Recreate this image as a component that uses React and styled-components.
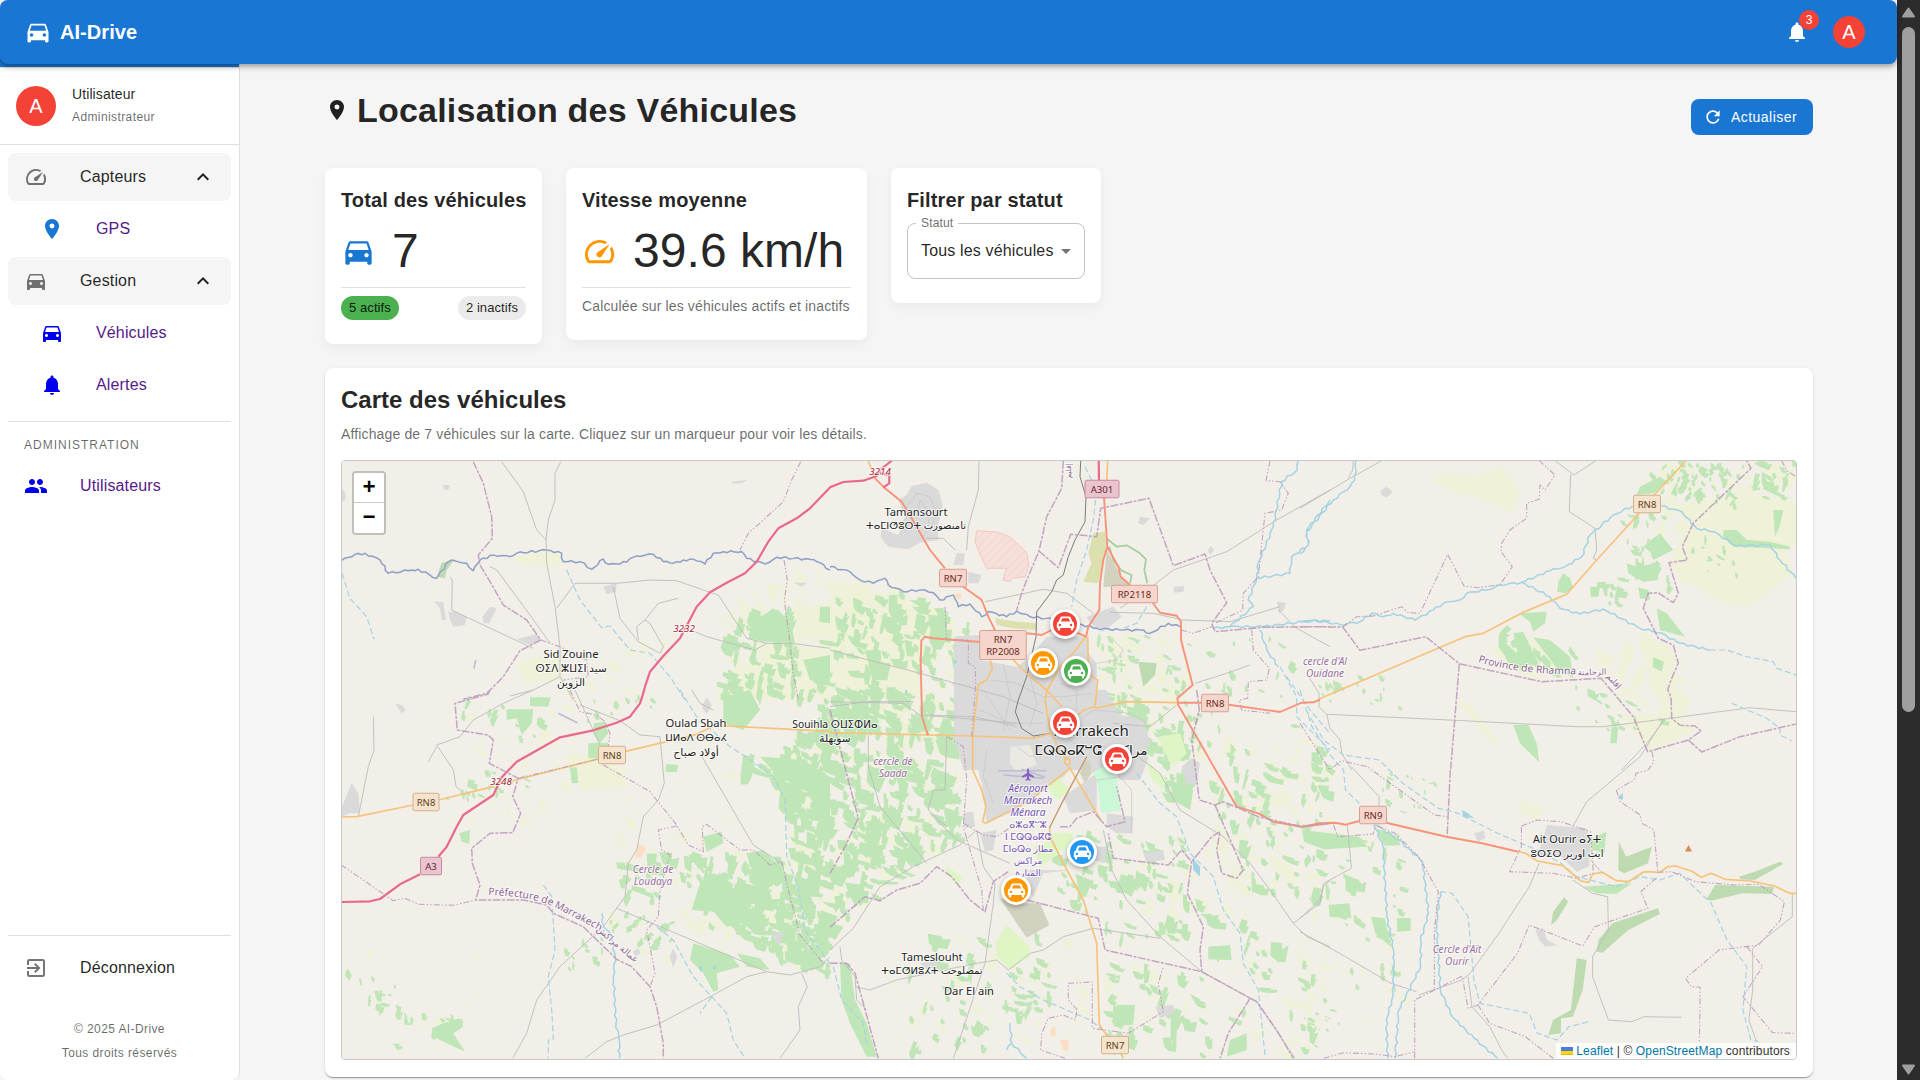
import React from "react";
import styled, { createGlobalStyle, css } from "styled-components";
import {
  MdDirectionsCar,
  MdSpeed,
  MdLocationOn,
  MdNotifications,
  MdPeople,
  MdExitToApp,
  MdRefresh,
  MdExpandLess,
  MdArrowDropDown,
} from "react-icons/md";

const GlobalStyle = createGlobalStyle`
  *, *::before, *::after { box-sizing: border-box; }
  html, body { margin: 0; padding: 0; height: 100%; overflow: hidden; }
  body {
    background: #f5f5f5;
    color: rgba(0, 0, 0, 0.87);
    font-family: "Liberation Sans", Arial, sans-serif;
    font-size: 16px;
    line-height: 1.5;
    letter-spacing: 0.00938em;
  }
  #root { height: 100%; }
  svg { display: block; flex: none; }
`;

/* ---------- shell ---------- */
const Frame = styled.div`
  display: flex;
  height: 1080px;
`;
const Page = styled.div`
  flex: 1;
  min-width: 0;
  display: flex;
  flex-direction: column;
`;
const Body = styled.div`
  flex: 1;
  min-height: 0;
  display: flex;
`;
const ScrollTrack = styled.div`
  width: 23px;
  background: #2c2c2c;
  display: flex;
  flex-direction: column;
  align-items: center;
  padding: 7px 0 5px;
`;
const ScrollThumb = styled.div`
  width: 13px;
  height: 685px;
  margin: 9px 0 auto;
  border-radius: 7px;
  background: #9f9f9f;
`;

/* ---------- header ---------- */
const Header = styled.header`
  position: relative;
  z-index: 2;
  height: 64px;
  flex: none;
  display: flex;
  align-items: center;
  padding: 0 32px 0 24px;
  border-radius: 8px;
  background: #1976d2;
  color: #fff;
  box-shadow: 0 2px 4px -1px rgba(0, 0, 0, 0.2), 0 4px 5px 0 rgba(0, 0, 0, 0.14),
    0 1px 10px 0 rgba(0, 0, 0, 0.12);
`;
const Brand = styled.div`
  flex: 1;
  display: flex;
  align-items: center;
  gap: 8px;
  font-size: 20px;
  font-weight: 700;
  letter-spacing: 0.003em;
`;
const BellButton = styled.div`
  position: relative;
  margin-right: 24px;
`;
const Badge = styled.span`
  position: absolute;
  top: -10px;
  right: -10px;
  width: 20px;
  height: 20px;
  border-radius: 50%;
  background: #f44336;
  font-size: 12px;
  line-height: 20px;
  text-align: center;
  letter-spacing: 0;
  font-weight: 500;
`;
const Avatar = styled.div`
  width: ${(p) => p.$size}px;
  height: ${(p) => p.$size}px;
  flex: none;
  border-radius: 50%;
  background: #f44336;
  color: #fff;
  display: flex;
  align-items: center;
  justify-content: center;
  font-size: 20px;
  line-height: 1;
  letter-spacing: 0;
`;

/* ---------- sidebar ---------- */
const Sidebar = styled.aside`
  width: 240px;
  margin-top: -8px;
  flex: none;
  display: flex;
  flex-direction: column;
  background: #fff;
  border-right: 1px solid #e0e0e0;
  border-radius: 0 0 8px 8px;
  overflow: hidden;
`;
const TopStrip = styled.div`
  height: 11px;
  flex: none;
  margin-right: -1px;
  background: #1976d2;
`;
const UserBlock = styled.div`
  height: 78px;
  flex: none;
  display: flex;
  align-items: center;
  gap: 16px;
  padding: 0 16px;
  border-top: 1px solid #e0e0e0;
  border-bottom: 1px solid #e0e0e0;
`;
const UserName = styled.div`
  font-size: 14px;
  line-height: 22px;
  letter-spacing: 0.1px;
`;
const UserRole = styled.div`
  font-size: 12px;
  line-height: 20px;
  margin: 2px 0 2px;
  letter-spacing: 0.4px;
  color: rgba(0, 0, 0, 0.6);
`;
const Nav = styled.nav`
  flex: 1;
  padding: 8px 8px 0;
`;
const NavItem = styled.div`
  height: 48px;
  margin-bottom: 4px;
  display: flex;
  align-items: center;
  padding: 0 16px 0 ${(p) => (p.$nested ? 32 : 16)}px;
  border-radius: 8px;
  background: ${(p) => (p.$group ? "#f5f5f5" : "transparent")};
  color: ${(p) => p.$icon || "rgba(0,0,0,.54)"};
`;
const NavLabel = styled.span`
  flex: 1;
  margin-left: 32px;
  color: ${(p) => (p.$link ? "#551a8b" : "rgba(0,0,0,.87)")};
`;
const Chevron = styled.span`
  color: rgba(0, 0, 0, 0.87);
`;
const Rule = styled.hr`
  height: 1px;
  border: 0;
  margin: ${(p) => p.$m || "0"};
  background: #e0e0e0;
`;
const Overline = styled.div`
  padding-left: 16px;
  height: 33px;
  line-height: 32px;
  font-size: 12px;
  letter-spacing: 1px;
  text-transform: uppercase;
  color: rgba(0, 0, 0, 0.6);
`;
const SideFooter = styled.div`
  padding: 0 8px 15px;
`;
const LegalBlock = styled.div`
  margin-top: 25px;
`;
const Legal = styled.div`
  text-align: center;
  font-size: 12px;
  line-height: 24px;
  letter-spacing: 0.4px;
  color: rgba(0, 0, 0, 0.6);
`;

/* ---------- content ---------- */
const Content = styled.main`
  flex: 1;
  min-width: 0;
  padding: 25px 84px 0 85px;
  display: flex;
  flex-direction: column;
`;
const TitleRow = styled.div`
  display: flex;
  align-items: flex-start;
  justify-content: space-between;
  height: 79px;
  flex: none;
`;
const PageTitle = styled.h1`
  margin: 0;
  display: flex;
  align-items: center;
  gap: 8px;
  font-size: 34px;
  line-height: 42px;
  font-weight: 700;
  letter-spacing: 0.0063em;
`;
const RefreshButton = styled.button`
  height: 36px;
  margin-top: 10px;
  padding: 0 16px 0 12px;
  display: flex;
  align-items: center;
  gap: 8px;
  border: 0;
  border-radius: 8px;
  background: #1976d2;
  color: #fff;
  font: 14px "Liberation Sans", Arial, sans-serif;
  letter-spacing: 0.45px;
`;
const CardRow = styled.div`
  display: flex;
  align-items: flex-start;
  gap: 24px;
`;
const Card = styled.section`
  width: ${(p) => p.$w}px;
  padding: 16px 16px 24px;
  border-radius: 8px;
  background: #fff;
  box-shadow: 0 4px 12px rgba(0, 0, 0, 0.05);
`;
const CardTitle = styled.h2`
  margin: 0 0 7px;
  font-size: 20px;
  line-height: 32px;
  font-weight: 700;
  letter-spacing: 0.0065em;
  white-space: nowrap;
`;
const Metric = styled.div`
  display: flex;
  align-items: center;
  gap: 16px;
  margin-bottom: 8px;
  color: ${(p) => p.$tint};
`;
const MetricValue = styled.span`
  font-size: 48px;
  line-height: 56px;
  letter-spacing: 0.05px;
  color: rgba(0, 0, 0, 0.87);
  white-space: nowrap;
`;
const ChipRow = styled.div`
  display: flex;
  justify-content: space-between;
  margin-top: 8px;
`;
const Chip = styled.span`
  height: 24px;
  padding: 0 8px;
  border-radius: 12px;
  background: ${(p) => p.$bg};
  font-size: 13px;
  line-height: 24px;
  letter-spacing: 0.08px;
  white-space: nowrap;
`;
const Caption = styled.p`
  margin: ${(p) => p.$m || "0"};
  font-size: 14px;
  line-height: 20px;
  letter-spacing: 0.01em;
  color: rgba(0, 0, 0, 0.6);
  white-space: nowrap;
`;
const SelectBox = styled.div`
  position: relative;
  height: 56px;
  display: flex;
  align-items: center;
  justify-content: space-between;
  padding: 0 6px 0 13px;
  border: 1px solid rgba(0, 0, 0, 0.23);
  border-radius: 8px;
  white-space: nowrap;
  color: rgba(0, 0, 0, 0.54);
`;
const SelectLabel = styled.span`
  position: absolute;
  top: -10px;
  left: 8px;
  padding: 0 5px;
  background: #fff;
  font-size: 12px;
  line-height: 18px;
  color: rgba(0, 0, 0, 0.6);
`;
const SelectValue = styled.span`
  color: rgba(0, 0, 0, 0.87);
`;
const MapCard = styled.section`
  margin-top: 24px;
  height: 709px;
  padding: 16px;
  border-radius: 8px;
  background: #fff;
  box-shadow: 0 2px 1px -1px rgba(0, 0, 0, 0.2), 0 1px 1px 0 rgba(0, 0, 0, 0.14),
    0 1px 3px 0 rgba(0, 0, 0, 0.12);
`;
const MapTitle = styled.h2`
  margin: 0 0 8px;
  font-size: 24px;
  line-height: 32px;
  font-weight: 700;
  letter-spacing: 0;
`;

/* ---------- map ---------- */
const MapView = styled.div`
  position: relative;
  height: 600px;
  border: 1px solid #c8c8c8;
  border-radius: 4px;
  overflow: hidden;
  background: #f2efe9;
`;
const ZoomControl = styled.div`
  position: absolute;
  top: 10px;
  left: 10px;
  width: 34px;
  height: 64px;
  border: 2px solid rgba(0, 0, 0, 0.2);
  background-clip: padding-box;
  border-radius: 4px;
  display: flex;
  flex-direction: column;
`;
const ZoomButton = styled.div`
  height: 30px;
  flex: none;
  display: flex;
  align-items: center;
  justify-content: center;
  background: #fff;
  color: #000;
  padding-top: ${(p) => (p.$first ? 3 : 2)}px;
  border-radius: ${(p) => (p.$first ? "2px 2px 0 0" : "0 0 2px 2px")};
  ${(p) =>
    p.$first &&
    css`
      border-bottom: 1px solid #ccc;
    `}
  font: bold 22px/26px "Liberation Mono", monospace;
  letter-spacing: 0;
`;
const Attribution = styled.div`
  position: absolute;
  right: 0;
  bottom: 0;
  height: 16px;
  padding: 0 6px 0 5px;
  display: flex;
  align-items: center;
  gap: 3px;
  background: rgba(255, 255, 255, 0.8);
  font-size: 12px;
  line-height: 16px;
  letter-spacing: 0.13px;
  color: #333;
  white-space: nowrap;
`;
const MapLink = styled.span`
  color: #0078a8;
`;
const Pin = styled.div`
  position: absolute;
  left: ${(p) => p.$x - 15}px;
  top: ${(p) => p.$y - 15}px;
  width: 30px;
  height: 30px;
  border: 3px solid #fff;
  border-radius: 50%;
  background: ${(p) => p.$c};
  color: #fff;
  display: flex;
  align-items: center;
  justify-content: center;
  box-shadow: 0 2px 5px rgba(0, 0, 0, 0.3);
`;

/* Map sheets: origin and scale of each survey sheet inside the map plane. */
const SHEETS = {
  A: [-12, -101, 3],
  B: [488, -11, 3],
  C: [958, -11, 3],
  D: [-12, 229, 3],
  E: [488, 229, 3],
  F: [958, 229, 2.529],
};
const project = (sheet, pts) => {
  const [ox, oy, sx] = SHEETS[sheet];
  return pts.split(" ").map((p) => {
    const [x, y] = p.split(",").map(Number);
    return [ox + x / sx, oy + y / 3];
  });
};
const toD = (pts, close) =>
  "M" + pts.map(([x, y]) => x.toFixed(1) + " " + y.toFixed(1)).join("L") + (close ? "Z" : "");

const layer = (defs) => defs.map(([s, p]) => toD(project(s, p), false)).join("");
const area = (defs) => defs.map(([s, p]) => toD(project(s, p), true)).join("");

/* Adds small meanders to a watercourse. */
const wavy = (defs) =>
  defs
    .map(([s, p], k) => {
      const pts = project(s, p);
      const out = [pts[0]];
      for (let i = 1; i < pts.length; i++) {
        const [ax, ay] = pts[i - 1];
        const [bx, by] = pts[i];
        const len = Math.hypot(bx - ax, by - ay) || 1;
        const n = Math.max(1, Math.round(len / 4));
        for (let j = 1; j <= n; j++) {
          const w = j === n ? 0 : Math.sin(j * 2.3 + i * 1.7 + k) * 1.1;
          out.push([
            ax + ((bx - ax) * j) / n - ((by - ay) / len) * w,
            ay + ((by - ay) * j) / n + ((bx - ax) / len) * w,
          ]);
        }
      }
      return toD(out, false);
    })
    .join("");

const rng = (seed) => () => {
  seed = (seed + 0x6d2b79f5) | 0;
  let t = Math.imul(seed ^ (seed >>> 15), 1 | seed);
  t = (t + Math.imul(t ^ (t >>> 7), 61 | t)) ^ t;
  return ((t ^ (t >>> 14)) >>> 0) / 4294967296;
};
const inside = (x, y, poly) => {
  let c = false;
  for (let i = 0, j = poly.length - 1; i < poly.length; j = i++) {
    const [xi, yi] = poly[i];
    const [xj, yj] = poly[j];
    if (yi > y !== yj > y && x < ((xj - xi) * (y - yi)) / (yj - yi) + xi) c = !c;
  }
  return c;
};
/* Field parcels strewn over a district. */
const parcels = (defs) =>
  defs
    .map(([s, p, count, size, tilt = 0.2], k) => {
      const poly = project(s, p);
      const xs = poly.map((q) => q[0]);
      const ys = poly.map((q) => q[1]);
      const x0 = Math.min(...xs);
      const x1 = Math.max(...xs);
      const y0 = Math.min(...ys);
      const y1 = Math.max(...ys);
      const r = rng(k * 977 + count * 31 + Math.round(size * 10));
      let d = "";
      let made = 0;
      for (let i = 0; i < count * 12 && made < count; i++) {
        const cx = x0 + r() * (x1 - x0);
        const cy = y0 + r() * (y1 - y0);
        if (!inside(cx, cy, poly)) continue;
        made++;
        const w = size * (0.25 + r() * r() * 1.3);
        const h = size * (0.25 + r() * r() * 1.3);
        const a = tilt + (r() - 0.5) * 0.5;
        const corners = [
          [-w, -h],
          [w * (0.1 + r() * 0.3), -h * (0.7 + r() * 0.5)],
          [w * 0.3, -h * 0.3],
          [w, -h * (0.1 + r() * 0.7)],
          [w * (0.7 + r() * 0.3), h],
          [-w * 0.1, h * (0.6 + r() * 0.6)],
          [-w * (0.3 + r() * 0.7), h * 0.4],
        ].map(([x, y]) => [
          cx + x * Math.cos(a) - y * Math.sin(a),
          cy + x * Math.sin(a) + y * Math.cos(a),
        ]);
        d += toD(corners, true);
      }
      return d;
    })
    .join("");

const WEST_GROVES = "1170,260 1350,200 1500,0 1500,790 1400,850 1250,740 1100,700 1240,560 1400,480 1330,260";
const WEST_GROVES_E = "0,0 270,0 370,150 400,280 380,450 250,520 150,620 0,740";

const FARMLAND = parcels([
  ["A", "1180,700 1500,640 1500,1020 1170,1020", 110, 8],
  ["B", "0,400 280,430 420,560 420,860 0,860", 150, 8],
  ["D", WEST_GROVES, 130, 8],
  ["E", WEST_GROVES_E, 130, 8],
  ["B", "770,560 1050,540 1090,700 1000,850 820,800", 60, 8],
  ["E", "830,420 1250,420 1250,780 1050,800 850,600", 60, 7],
  ["E", "1050,150 1500,150 1500,640 1250,640 1150,350", 60, 8],
  ["E", "1120,740 1500,740 1500,1100 1300,1100", 25, 7],
  ["E", "180,720 720,700 780,1000 640,1100 200,1100", 50, 6],
  ["E", "820,780 1110,850 1250,940 1180,1100 850,1100", 36, 6],
  ["A", "800,800 1060,820 900,1020 700,1020", 22, 5],
  ["D", "400,30 900,30 900,400 350,400", 60, 5],
  ["D", "820,400 1300,380 1350,800 850,830", 55, 6],
  ["C", "1060,40 1490,40 1490,300 1150,420 1060,200", 60, 9],
  ["C", "880,620 1120,560 1170,860 1000,850", 40, 9],
  ["F", "0,420 280,420 280,1000 0,1000", 40, 5],
  ["D", "100,790 480,780 450,1100 180,1100", 12, 4],
  ["B", "100,300 420,300 420,430 200,400", 12, 4],
]);
const FARM_BLOCKS = area([
  ["A", "550,590 640,570 695,585 695,615 650,620 560,608"],
  ["C", "400,95 430,70 530,80 600,50 640,90 660,130 640,195 590,165 540,145 470,130"],
  ["C", "1150,250 1200,200 1300,200 1450,280 1480,370 1350,470 1270,460 1140,380 1110,340"],
  ["C", "1110,170 1320,130 1490,150 1490,290 1330,290 1190,230"],
  ["C", "570,600 700,560 790,650 700,690 640,660"],
  ["C", "960,800 1100,790 1190,840 1050,905"],
  ["C", "1020,545 1110,590 1130,700 1110,800 1050,700"],
  ["C", "470,750 510,760 590,870 590,895 540,840"],
  ["F", "555,335 615,350 600,395 560,370"],
  ["A", "560,910 690,870 700,960 590,970"],
  ["A", "1290,850 1500,870 1500,1020 1180,1020 1200,930 1300,890"],
  ["A", "1400,740 1500,730 1500,830 1400,830"],
  ["B", "0,390 220,440 330,480 340,560 270,570 270,740 100,740 0,700"],
  ["D", "700,200 830,190 900,290 760,300"],
]);
const GROVES = parcels([
  ["A", "1180,800 1380,740 1400,860 1500,880 1500,1020 1180,1020", 75, 9.5],
  ["B", "0,400 250,440 420,540 420,850 0,850", 130, 9],
  ["D", WEST_GROVES, 220, 10],
  ["E", WEST_GROVES_E, 250, 9.5],
  ["D", "870,500 1350,500 1360,700 1250,700 1000,640 880,640", 75, 9],
  ["D", "1360,560 1500,600 1500,850 1400,850", 20, 10],
  ["E", "840,40 1100,20 1100,330 980,330", 42, 9],
  ["E", "1110,150 1500,180 1500,620 1250,620 1150,350", 75, 8],
  ["E", "640,440 1060,430 1080,760 960,740 850,760 690,620", 90, 7.5],
  ["E", "200,740 480,700 480,1090 230,1090", 34, 8],
  ["E", "500,780 720,700 660,950 520,1000", 26, 8],
  ["E", "820,830 1120,850 1260,940 1180,1100 830,1090", 40, 8],
  ["E", "1100,640 1500,780 1500,1100 1200,900", 26, 8],
  ["B", "780,560 1080,560 1080,700 1000,860 820,800", 50, 5],
  ["B", "1100,540 1400,560 1400,900 1100,900", 22, 5],
  ["C", "1080,40 1350,40 1300,180 1110,140 1010,130", 60, 5, 0.7],
  ["C", "960,180 1100,200 1110,420 1000,400", 24, 6],
  ["C", "1160,230 1360,260 1350,380 1180,380", 12, 4],
  ["C", "1370,40 1490,40 1490,130 1350,180", 20, 7],
  ["C", "900,390 990,380 980,480 910,470", 10, 7],
  ["C", "570,520 820,600 820,680 640,650", 22, 8, 0.8],
  ["C", "60,660 330,680 330,780 60,760", 20, 4],
  ["C", "820,690 1000,730 1110,820 820,880", 18, 5],
  ["D", "400,30 680,30 660,130 400,190", 10, 6],
  ["D", "820,660 1050,700 1010,780 840,760", 24, 5, 1.2],
  ["D", "440,240 640,240 600,300 330,340", 20, 5],
  ["D", "150,900 420,1000 400,1090 180,1090", 14, 6],
  ["D", "30,830 260,900 260,980 80,960", 12, 5],
  ["D", "700,760 830,700 820,840 700,840", 10, 5],
  ["D", "740,20 980,20 960,110 760,100", 12, 4],
  ["F", "0,420 260,400 300,560 260,900 140,900 60,700 0,640", 42, 6],
  ["F", "10,960 120,960 100,1090 10,1090", 16, 3],
  ["F", "170,200 350,280 280,420 200,310", 16, 4],
]);
const GREEN_BLOCKS = area([
  ["D", "530,58 610,58 605,100 575,135 560,85 530,90"],
  ["D", "600,22 662,22 655,50 600,48"],
  ["D", "775,160 835,158 835,205 775,205"],
  ["D", "792,100 825,95 835,130 810,160 790,130"],
  ["D", "720,232 740,232 745,280 725,280"],
  ["D", "1008,222 1045,225 1040,246 1006,246"],
  ["D", "388,430 420,420 418,462 395,455"],
  ["D", "340,1000 390,985 400,1010 370,1030 405,1085 350,1060 310,1040 305,1015"],
  ["D", "1110,580 1150,550 1180,560 1255,650 1250,695 1190,710 1150,665 1085,660"],
  ["D", "1090,760 1200,795 1230,830 1160,850 1165,900 1150,905 1120,850 1080,810"],
  ["D", "1220,790 1290,805 1320,840 1250,830"],
  ["D", "1290,200 1420,210 1500,260 1500,330 1420,300 1340,255"],
  ["D", "1440,340 1500,300 1500,420 1450,380"],
  ["D", "1120,440 1175,425 1180,460 1130,485"],
  ["D", "1180,20 1260,0 1290,60 1240,120 1180,100"],
  ["D", "1250,490 1300,480 1380,560 1340,590 1260,530"],
  ["A", "1265,790 1330,745 1380,780 1395,848 1310,845 1255,835"],
  ["A", "1420,900 1500,885 1500,970 1440,960"],
  ["A", "1470,740 1500,740 1500,790 1468,785"],
  ["E", "30,820 60,820 75,930 110,1000 140,1100 110,1100 60,1000 35,930"],
  ["E", "800,100 840,130 830,170 810,160"],
  ["E", "1135,770 1200,765 1205,810 1135,808"],
  ["E", "1200,1050 1250,1030 1250,1080 1190,1100"],
  ["E", "860,945 915,945 910,1005 865,1005"],
  ["E", "640,180 700,150 735,220 700,260 660,215"],
  ["E", "1020,270 1090,300 1080,360 1030,330"],
  ["C", "1270,240 1310,240 1340,270 1410,275 1470,290 1470,298 1300,290 1270,262"],
  ["C", "1420,180 1450,180 1440,225 1425,260"],
  ["C", "775,395 790,370 810,385 820,415 795,430 772,425"],
  ["C", "870,410 900,410 895,440 872,440"],
  ["C", "980,340 1010,350 1070,340 1075,390 1030,395 985,370"],
  ["C", "1070,475 1100,490 1155,560 1080,540"],
  ["C", "1015,412 1045,420 1050,450 1020,445"],
  ["C", "1060,622 1092,635 1085,665 1058,650"],
  ["C", "640,825 685,825 710,880 718,937 660,880"],
  ["C", "655,490 740,485 735,520 700,545 690,515"],
  ["C", "640,550 670,545 720,650 660,640"],
  ["C", "700,562 750,570 810,620 820,685 770,655"],
  ["C", "600,565 640,600 690,655 640,650 595,590"],
  ["C", "935,830 955,830 950,880 930,880"],
  ["C", "1020,110 1080,80 1100,95 1060,130 1010,135"],
  ["C", "1040,280 1080,250 1120,300 1060,330"],
  ["F", "5,420 150,440 170,470 60,478 10,455"],
  ["F", "190,415 240,435 255,465 215,468"],
  ["F", "245,684 280,684 280,722 245,725"],
  ["F", "115,555 150,570 140,620 115,600"],
  ["F", "72,645 125,640 130,685 75,680"],
  ["F", "180,680 215,685 230,770 190,730"],
  ["F", "715,590 840,580 800,612 750,610"],
  ["F", "730,450 775,425 770,490 740,480"],
]);
const WOODLAND = area([
  ["A", "320,650 335,608 372,600 350,630 345,655"],
  ["F", "755,750 790,700 905,655 910,672 830,720 765,788 750,785"],
  ["F", "1028,628 1050,585 1198,590 1195,612 1120,610 1040,632"],
  ["F", "1110,560 1150,545 1215,515 1222,522 1150,570 1115,568"],
  ["F", "806,455 825,500 890,470 880,520 820,550 805,540"],
  ["F", "635,705 640,665 668,622 678,635 650,690"],
  ["F", "700,805 725,810 715,900 690,980 660,985 660,1030 628,1035 640,990 685,960"],
  ["B", "925,635 980,640 975,675 940,710"],
]);
const URBAN = area([
  ["B", "205,150 230,135 245,108 290,98 325,120 338,165 325,225 325,270 270,278 235,298 175,290 152,262 155,235 205,255 225,200"],
  ["B", "372,560 450,555 450,630 560,650 600,620 650,560 770,560 775,610 800,640 800,760 850,790 940,810 960,880 940,920 920,960 640,960 620,930 540,900 520,960 400,960 372,860"],
  ["E", "372,0 830,0 860,60 900,100 955,205 930,270 870,270 840,225 790,250 740,210 700,260 660,290 560,360 470,400 455,280 430,190 375,160"],
  ["E", "450,430 500,420 490,480 465,485"],
  ["E", "400,370 430,365 435,410 405,415"],
  ["E", "830,370 910,380 905,430 860,430 830,410"],
  ["E", "700,320 800,250 800,360 720,370"],
  ["E", "780,470 830,470 825,520 790,510"],
  ["E", "590,540 720,540 640,550 610,620 590,600"],
  ["E", "1055,230 1085,205 1110,220 1100,280 1070,285"],
  ["E", "940,490 1000,480 1005,510 950,515"],
  ["E", "975,950 1030,945 1035,970 990,985"],
  ["B", "770,500 850,470 875,500 820,545 780,520"],
  ["B", "380,310 405,310 400,345 370,345"],
  ["B", "415,365 455,375 445,400 415,400"],
  ["B", "1030,410 1063,408 1060,425 1032,428"],
  ["B", "1340,455 1368,458 1362,480 1348,490"],
  ["B", "1133,300 1143,288 1153,300 1140,315"],
  ["B", "930,200 960,205 940,225 925,220"],
  ["A", "355,755 380,755 410,770 405,795 370,800 358,775"],
  ["A", "560,838 620,822 630,840 600,855"],
  ["A", "820,680 860,668 858,695 830,703"],
  ["A", "458,770 480,740 500,745 478,790 460,790"],
  ["A", "312,725 340,725 348,780 335,780 330,745"],
  ["A", "338,375 360,375 355,390 342,388"],
  ["A", "1205,365 1250,360 1235,370 1208,371"],
  ["A", "1390,668 1432,668 1415,680"],
  ["A", "36,385 46,400 46,420 36,425"],
  ["C", "240,122 260,110 278,125 260,143 245,135"],
  ["D", "65,280 85,310 90,370 60,370 36,380 36,350"],
  ["D", "1115,50 1130,22 1145,45 1130,72"],
  ["D", "1018,800 1030,775 1042,800 1030,832"],
  ["D", "908,785 925,775 932,790 918,800"],
  ["D", "195,40 215,45 228,60 215,70"],
  ["D", "1330,730 1360,725 1350,770 1330,745"],
  ["F", "625,405 725,415 735,470 730,530 700,545 660,500 600,500"],
  ["F", "440,430 465,422 468,445 450,455"],
  ["F", "595,720 615,715 625,750 650,765 620,770 605,750"],
  ["E", "270,820 310,810 330,830 290,838"],
]);
const MINOR = layer([
  ["A", "515,305 580,395 620,510 648,540 650,610 675,740 690,860 690,950 730,1020"],
  ["A", "692,305 675,340 675,420 655,480 648,540"],
  ["A", "480,620 500,630 600,765 660,850"],
  ["A", "680,745 735,670 860,670 960,660 1040,662 1140,697 1165,705 1250,835 1310,850"],
  ["A", "1095,815 1130,830 1275,870 1310,850 1400,852 1500,865"],
  ["A", "360,650 367,660 365,750 460,795 610,865"],
  ["A", "850,680 870,775 925,845 990,880 1000,860 960,790 945,780 920,800 925,840"],
  ["A", "1045,715 985,730 945,780"],
  ["A", "690,950 610,990 540,1008"],
  ["D", "735,0 810,165"],
  ["D", "610,0 520,40 430,90 390,140 320,165 370,240 378,290 400,308"],
  ["D", "320,170 295,215"],
  ["D", "130,80 132,180 115,230 85,380"],
  ["D", "750,45 870,92 930,135 990,140 1003,280 985,330 940,380 920,480 895,520 885,620 820,710 690,830 620,930 590,1030 548,1105"],
  ["D", "860,655 1310,845 1250,860 1150,915 980,1005 880,1035 830,1055 765,1105"],
  ["D", "1310,845 1380,855 1470,830 1500,800"],
  ["D", "1110,190 1270,465 1355,520"],
  ["D", "1415,850 1432,890 1405,950 1410,1020 1350,1105"],
  ["D", "1085,0 1110,40 1150,60"],
  ["B", "447,32 445,120 415,230 410,300"],
  ["B", "0,600 270,670 520,740 640,790"],
  ["B", "465,455 640,418 710,430 790,490"],
  ["B", "1500,120 1340,210 1190,305 1030,360 965,410 870,475"],
  ["B", "840,487 970,490 1060,510 1200,515 1350,470"],
  ["B", "1345,480 1400,535 1500,590"],
  ["B", "300,795 430,800 520,820 560,830"],
  ["B", "0,770 110,755 250,755"],
  ["B", "290,265 340,265 375,300"],
  ["B", "1095,700 1190,670 1260,645"],
  ["B", "850,820 960,830 1040,765"],
  ["C", "0,175 145,88 245,32"],
  ["C", "160,32 158,60 145,85"],
  ["C", "765,32 822,75 888,32"],
  ["C", "812,72 808,185 885,235 890,300 880,325 890,330"],
  ["C", "80,793 240,800 490,812 830,830 910,830 1110,805 1350,773 1488,785"],
  ["C", "1095,808 1040,880 965,960"],
  ["C", "20,670 57,730 57,770 80,793 90,835 120,870 125,910 155,960"],
  ["F", "920,88 860,200 725,335 690,410"],
  ["F", "605,520 580,590 500,735 430,850 410,870 300,915"],
  ["F", "295,905 230,880 100,790 0,725"],
  ["F", "690,570 740,610 778,620 780,720 740,800 740,860 780,990 840,995 870,980 965,982"],
  ["F", "735,510 765,550"],
  ["F", "1245,612 1245,680 1145,775 1145,900 1135,990 1155,1055"],
  ["F", "120,405 130,535 60,580 50,630 0,685"],
  ["F", "130,230 200,320 200,350"],
  ["F", "425,860 435,950 480,1010 510,1080 525,1105"],
  ["E", "820,420 845,540 890,630 990,740 1115,845 1280,935 1395,1105"],
  ["E", "925,200 990,250 1050,360 1180,440 1260,520 1320,600 1390,700 1430,740 1500,770"],
  ["E", "1390,700 1470,640 1480,590 1500,570"],
  ["E", "440,420 460,530 495,580 490,640 465,820 370,1105"],
  ["E", "0,780 70,715 150,590 250,530 390,465 440,420"],
  ["E", "115,135 115,230 150,350 250,470 290,520"],
  ["E", "300,370 380,450 540,520"],
  ["E", "350,140 345,300 310,300 295,360 350,410"],
  ["E", "440,820 500,810 535,840 600,790 640,780 700,740 790,715 990,745"],
  ["E", "75,890 120,900 200,870 440,820"],
  ["E", "30,770 35,810 75,860 80,930 110,960"],
  ["E", "0,35 220,40 270,75 460,90 560,100"],
]);
const STREETS = layer([
  ["B", "480,690 560,700 640,740 700,740 790,730"],
  ["B", "520,640 540,740 520,840"],
  ["B", "690,700 740,720 740,780"],
  ["B", "450,780 540,820 640,820"],
  ["B", "800,640 860,630 880,600 850,570"],
  ["B", "600,680 620,760 600,830"],
  ["B", "230,250 215,220 240,190 230,170 260,130 300,140 320,190 300,240"],
  ["B", "260,200 270,150 290,180 300,240"],
  ["E", "460,0 500,60 540,120"],
  ["E", "560,170 600,200 640,190 690,190"],
  ["E", "760,80 790,60 900,70 950,100"],
  ["E", "800,270 870,260 905,300 905,430"],
  ["E", "470,180 460,260 490,340"],
  ["E", "700,60 720,150 760,180 830,170"],
]);
const MOTORWAY = layer([
  ["A", "1502,380 1440,445 1400,475 1345,505 1315,545 1280,605 1245,640 1190,668 1140,697 1100,740 1050,835 1000,888 960,935 945,980 932,1025"],
  ["D", "943,0 930,40 900,80 860,98 790,121 690,142 640,170 560,215 515,262 490,315 400,375 380,410 350,470 325,500"],
  ["D", "270,553 210,583 150,627 120,634 34,636"],
  ["B", "0,112 40,96 100,92 140,78 150,60 185,32"],
  ["B", "160,112 178,100 178,75 150,70"],
  ["B", "806,32 807,95"],
]);
const TRUNK = layer([
  ["B", "135,85 165,115 215,155 245,205 300,300 345,355"],
  ["B", "400,410 455,450 475,500 497,545"],
  ["B", "822,140 832,290 820,330 810,400 808,480 775,530 768,560"],
  ["B", "832,290 865,350 872,380 900,405"],
  ["B", "968,458 990,488 1040,497 1053,515 1053,570 1088,705 1042,745 1045,765 1220,1070"],
  ["E", "1220,350 1285,370 1330,395 1415,410 1500,400"],
  ["F", "0,412 50,400 90,398 115,404 150,393"],
  ["F", "218,398 370,440 460,460 552,485"],
  ["B", "1042,758 1115,758"],
  ["B", "1196,764 1350,786 1415,758 1450,757 1470,749"],
  ["B", "590,550 635,555 665,540"],
  ["B", "740,548 768,560"],
  ["B", "450,576 310,565 285,560 274,572 272,640 276,800 294,856"],
]);
const PRIMARY = layer([
  ["C", "57,747 495,560 550,550 670,487 800,433 890,330 1018,190"],
  ["C", "1060,138 1160,30"],
  ["B", "768,560 720,620 690,650 652,720 645,750 660,840 690,905 712,930"],
  ["B", "712,920 720,930 720,940 712,945 704,940 704,928 712,920"],
  ["B", "548,628 600,680 650,720 695,770"],
  ["B", "773,560 775,650 785,680 803,690 795,770 760,780 740,800"],
  ["B", "795,775 890,755 1042,758"],
  ["B", "0,848 430,858 610,865 665,850"],
  ["D", "34,381 80,380 250,345"],
  ["D", "325,330 490,290"],
  ["D", "545,273 805,207"],
  ["D", "887,184 1100,133 1150,108 1190,108 1400,119 1502,125"],
  ["B", "480,628 487,655 470,690 445,705 428,860 428,960"],
  ["E", "428,140 428,240 455,300 468,350 458,395 468,400 600,330 720,235"],
  ["E", "712,225 720,235 815,395"],
  ["E", "658,415 665,450 700,520 760,630 800,760 808,1005 835,1042"],
  ["E", "872,1090 880,1105"],
  ["B", "115,32 135,85"],
  ["B", "833,32 830,92"],
  ["F", "550,484 570,490 600,513 665,527 710,573 730,577 740,552 765,547 800,572 830,575 870,545 910,547 930,530 950,528 990,543 1015,562 1040,550 1075,568 1140,573 1200,588 1238,610 1257,610"],
]);
const RAIL = layer([
  ["B", "752,32 750,80 768,140 765,215 735,270 715,320 700,375 680,390 665,425 620,485 618,560 590,680 565,750 556,785 575,835 610,858 665,850"],
]);
const BORDER = layer([
  ["A", "430,305 460,370 485,470 487,535 445,585 450,615 480,665 520,735 590,780 632,840 570,872 520,950 470,1000 400,1018"],
  ["D", "480,0 475,12 375,40 382,120 475,135 490,150 478,220 565,265 548,320 572,370 548,428 480,430 425,475 427,520 450,585 437,630 580,630 650,645 670,670 760,710 860,808 905,830 960,890 980,950 1000,1060 1000,1105"],
  ["B", "700,32 695,115 650,200 627,303 590,390 575,430 560,480"],
  ["B", "627,303 685,353 722,253 800,260 812,175 957,145 1030,347 1125,312 1140,360 1190,458 1145,520 1155,545 1300,532 1500,530"],
  ["C", "0,530 128,531 180,601 377,560 478,641 725,695 903,685 1000,800 1043,905 1165,870 1203,843 1185,828 1140,826 1115,805 1113,740 1103,720 1113,690 1135,640 1120,585 1075,565 1030,475 1045,430 1075,428 1120,458 1135,430 1107,338 1162,330 1147,290 1180,220 1353,55 1340,32"],
  ["C", "478,641 452,957"],
  ["F", "380,240 372,440"],
  ["C", "1165,870 1205,906 1320,860 1488,822"],
  ["E", "0,712 105,620 150,632 200,600 270,580 320,530 365,560 420,630 465,665 490,575 535,545"],
  ["E", "590,630 805,685 825,780 1115,845 1110,780 1120,710 1072,610 1085,515 1055,480 1015,525 850,505 835,430"],
  ["E", "1115,845 1280,935 1340,1020 1390,1105"],
  ["E", "1155,345 1240,540 1220,565 1175,550 1160,480 1170,425 1145,440 1085,515"],
  ["E", "1100,0 1108,60 1085,150 1108,330 1155,345 1180,335 1285,380 1415,410 1500,400"],
  ["E", "1260,925 1195,1030 1170,1105"],
  ["E", "0,820 50,820 75,850 100,940 145,1105"],
  ["E", "0,60 85,385 45,470 0,550"],
  ["E", "690,410 720,410 740,385 790,365 830,410 885,395 860,290"],
]);
const BORDER_FINE = layer([
  ["A", "1412,305 1385,360 1360,425 1300,480 1255,520 1230,570"],
  ["A", "1362,600 1372,660 1363,720 1380,850 1390,940 1405,1020"],
  ["A", "632,840 690,860 770,900 775,950 700,960"],
  ["D", "34,525 190,632 225,625 265,643 370,646 437,630"],
  ["D", "565,265 805,207"],
  ["D", "820,225 900,270 960,305 1040,405 1075,465 1120,485 1117,410 1130,403 1230,480 1270,480 1320,525 1355,515 1380,620 1410,735 1480,820 1500,820"],
  ["D", "1040,408 985,420 995,480 1020,495 990,600 985,680 950,720 975,850 960,890"],
  ["D", "720,0 750,65 800,75 825,95 840,130 835,170"],
  ["B", "1320,32 1308,92 1350,95 1375,130 1355,180 1305,190 1285,380 1240,430 1238,480 1155,520"],
  ["B", "1265,540 1270,600 1318,655 1310,690 1255,695 1253,745 1228,750 1235,780 1320,790"],
  ["B", "1053,540 1090,550 1145,530"],
  ["B", "345,470 350,570 415,570 415,640 435,650 437,700 425,860"],
  ["E", "352,140 400,170 410,270 400,410 455,600 460,665"],
  ["E", "400,400 460,435 500,440 560,400"],
  ["E", "740,965 735,990 700,975 655,985 635,1030 632,1080 705,1105"],
  ["E", "742,960 715,930 715,880 787,876 787,1015 895,1030 1000,965 985,880 1000,830"],
  ["C", "128,531 170,500 220,498 305,470 325,488 360,490 443,313 492,408 530,413 600,404 637,350 603,305 605,280 630,240 680,205 680,160 718,148 720,105 735,120 765,75 718,32"],
  ["C", "1445,32 1460,62 1488,80"],
  ["F", "890,185 895,215 880,240 850,250 845,270 800,300 810,335 860,375 865,400 895,420 905,547"],
  ["F", "905,547 940,545 1000,575 1100,585 1160,583 1225,635 1215,690 1160,765 1060,780 975,865 990,890 1012,892 1010,1058"],
  ["F", "1130,770 1170,830 1120,920 1195,1028 1255,1030"],
  ["F", "560,408 600,390 660,395 735,425 742,550 700,565 640,550 530,545 560,470 560,408"],
  ["F", "0,100 75,240 105,212 170,230 340,375 372,380"],
  ["F", "85,404 95,440 185,432 190,405 240,430 300,500 350,605 340,720 340,895"],
  ["F", "290,1105 290,930 410,858 425,955 450,945 550,790 580,705 715,768 745,710 880,655 862,605 905,560"],
  ["F", "450,945 480,1000 570,1040 640,1105"],
  ["F", "60,1105 110,1088 190,1092 240,1100 290,1085"],
]);
const RIVERS = wavy([
  ["C", "0,517 40,510 120,524 180,515 215,490 250,500 280,490 345,510 400,480 440,455 480,450 500,430 580,415 600,405 665,397 750,362 795,350 845,320 870,255 905,225 940,195 998,168"],
  ["C", "1083,168 1145,185 1190,235 1240,245 1310,288 1410,285 1440,330 1488,385"],
  ["C", "665,397 750,440 780,475 840,492 910,477 1020,535 1080,548 1140,580 1230,600"],
  ["C", "168,32 165,90 150,110 100,150 20,245 25,285 0,312"],
  ["B", "1405,32 1402,60 1355,95 1330,230 1285,340 1280,385 1255,450 1270,470 1200,530 1150,535"],
  ["B", "1280,385 1380,370 1385,320 1435,285 1430,240 1500,150"],
  ["B", "1200,530 1300,530 1420,515 1500,512"],
  ["B", "1290,540 1310,600 1345,650"],
  ["D", "815,670 820,705 845,740 855,800 850,860 858,1000 868,1050 868,1105"],
  ["E", "540,1000 545,1060 590,1105"],
  ["E", "545,1060 530,1080"],
  ["F", "188,405 210,470 220,680 238,790 235,920 218,990 222,1105"],
  ["F", "192,405 250,450 310,515 325,670 305,750 305,830 250,960 240,1105"],
  ["F", "355,605 345,700 355,900 385,980 440,1045 500,1105"],
]);
const WADIS = layer([
  ["A", "36,640 60,715 110,770 132,838"],
  ["A", "710,630 750,720 815,803 840,798 900,870 960,880 1020,950 1065,1020"],
  ["D", "1050,0 1100,80 1200,170 1270,215 1330,260 1365,330 1370,500 1405,590 1425,720 1500,820"],
  ["D", "640,585 665,620 675,780 655,860 665,960 670,1050 655,1050 655,1105"],
  ["D", "980,710 1030,750 1090,860 1145,920 1190,970 1210,1050 1245,1105"],
  ["D", "1145,920 1110,970"],
  ["B", "765,50 800,120 790,210 770,300 740,390 725,470"],
  ["B", "950,470 920,520 880,535"],
  ["B", "1350,650 1400,740 1400,800 1430,830 1500,900"],
  ["B", "1370,680 1440,780 1500,850"],
  ["E", "920,250 990,340 1040,380 1080,490 1150,560 1180,660 1230,730 1240,820 1285,900 1305,1095"],
  ["E", "530,850 570,890 640,930 780,990 830,1030 858,1105"],
  ["E", "10,830 35,930 100,1000 110,1060"],
  ["F", "355,605 385,610 425,680 440,870 455,940 580,970 600,1030 650,1050 680,1010 730,995"],
  ["F", "15,60 60,150 110,195 200,210 260,280 350,355 400,370 500,430 600,480 660,520 700,560 800,590 860,560 910,570 960,550 1040,640 1080,750 1130,830 1120,960 1140,1050 1160,1055"],
  ["F", "0,0 30,110 80,200 110,240 115,300 150,340"],
  ["C", "1295,760 1400,805 1440,835 1440,855 1475,872"],
  ["C", "1230,600 1280,600 1340,620 1420,635 1430,655 1488,675"],
]);
const TENSIFT = wavy([
  ["A", "36,601 75,583 105,580 150,600 175,640 235,632 265,628 320,655 355,605 375,602 410,610 430,632 450,600 490,585 540,590 560,580 650,570 695,580 700,605 750,605 785,628 820,597 835,613 870,612 920,588 970,583 1000,605 1030,610 1060,600 1090,598 1125,612 1150,580 1180,575 1235,575 1250,595 1305,612 1340,592 1440,598 1470,608 1500,630"],
  ["B", "0,350 60,365 90,390 130,400 165,385 175,405 220,425 270,420 310,428 330,450 370,435 385,470 420,462 455,500 475,485 530,500 560,483 600,500 670,508"],
  ["B", "745,522 800,535 870,540 930,540 960,550 1015,520 1050,530"],
]);
const WATER = area([
  ["F", "410,360 425,370 440,385 412,380"],
  ["F", "805,320 815,310 818,325 812,330"],
  ["E", "1088,505 1110,530 1110,560 1090,540"],
  ["D", "1108,828 1115,828 1115,845 1108,840"],
  ["D", "1150,825 1158,825 1158,838 1150,838"],
  ["B", "225,720 232,720 232,730 225,730"],
  ["B", "372,630 380,632 378,642 372,640"],
]);

const SHIELD = {
  a: ["#eac4cf", "#c98a9c", "#6d1f38"],
  t: ["#f6d5cc", "#d8a093", "#6b2a1c"],
  p: ["#f6e3cd", "#d3b08a", "#5d4420"],
};
const SHIELDS = [
  ["a", 760, 28, 34, 17.5, ["A301"]],
  ["t", 611, 117, 27, 17.5, ["RN7"]],
  ["t", 792.5, 133, 46, 17.5, ["RP2118"]],
  ["t", 661, 184, 46.5, 29, ["RN7", "RP2008"]],
  ["t", 873, 242, 27, 17.5, ["RN8"]],
  ["t", 1031, 354, 27, 17.5, ["RN9"]],
  ["p", 1305, 43, 27, 17.5, ["RN8"]],
  ["p", 270, 294, 27, 17.5, ["RN8"]],
  ["p", 84, 341, 26, 17.5, ["RN8"]],
  ["a", 89, 405, 21, 17.5, ["A3"]],
  ["p", 773, 584, 27, 17.5, ["RN7"]],
];
const PLACES = [
  [574, 54.5, 11.2, "Tamansourt"],
  [574, 68, 10, "ⵜⴰⵎⵏⵚⵓⵔⵜ تامنصورت"],
  [229, 196.5, 11.2, "Sid Zouine"],
  [229, 210.5, 10.4, "ⵙⵉⴷ ⵣⵡⵉⵏ سيد"],
  [229, 225, 10.6, "الزوين"],
  [354, 266, 11.2, "Oulad Sbah"],
  [354, 280, 10, "ⵡⵍⴰⴷ ⵙⴱⴰⵃ"],
  [354, 294.5, 11, "أولاد صباح"],
  [493, 267, 10.3, "Souihla ⵙⵡⵉⵀⵍⴰ"],
  [493, 281, 10.6, "سويهلة"],
  [590, 499.5, 11.2, "Tameslouht"],
  [590, 513, 10, "ⵜⴰⵎⵚⵍⵓⵃⵜ تمصلوحت"],
  [627, 534, 11.2, "Dar El ain"],
  [1225, 381.5, 10.8, "Ait Ourir ⴰⵢⵜ"],
  [1225, 395.5, 10.2, "ⵓⵔⵉⵔ ايت اورير"],
  [749, 274.5, 15, "Marrakech"],
  [749, 293.5, 13.6, "ⵎⵕⵕⴰⴽⵯⵛ مراكش"],
];
const DISTRICTS = [
  [983, 204, "cercle d'Al"],
  [983, 216, "Ouidane"],
  [551, 304, "cercle de"],
  [551, 316, "Saada"],
  [311, 412, "Cercle de"],
  [311, 424, "Loudaya"],
  [1115, 491.5, "Cercle d'Aït"],
  [1115, 503.5, "Ourir"],
];
const AIRPORT = [
  "Aéroport",
  "Marrakech",
  "Ménara",
  "ⴰⵣⴰⴳⵯⵣ",
  "ⵏ ⵎⵕⵕⴰⴽⵛ",
  "ⵎⵏⴰⵕⴰ مطار",
  "مراكش",
  "المنارة",
];
const EXITS = [
  [538, 13.5, "3214"],
  [342, 171, "3232"],
  [159, 324, "3248"],
];
const VEHICLES = [
  [723, 162.5, "#f44336"],
  [701, 202, "#ff9800"],
  [734, 210, "#4caf50"],
  [723, 262, "#f44336"],
  [775, 298, "#f44336"],
  [740, 391, "#2196f3"],
  [674, 429, "#ff9800"],
];

const MapText = styled.text`
  font-family: "Noto Sans", "DejaVu Sans", sans-serif;
  font-size: ${(p) => p.$size}px;
  font-style: ${(p) => (p.$italic ? "italic" : "normal")};
  fill: ${(p) => p.$fill || "#222"};
  stroke: ${(p) => (p.$plain ? "none" : "rgba(255,255,255,.75)")};
  stroke-width: 2px;
  stroke-linejoin: round;
  paint-order: stroke;
  text-anchor: ${(p) => p.$anchor || "middle"};
  letter-spacing: 0;
`;

function CarGlyph() {
  return (
    <svg width="19" height="15" viewBox="0 0 19 15" fill="currentColor" fillRule="evenodd">
      <path d="M2.7 5.6L4.1 1.9Q4.7.5 6.2.5h6.6q1.5 0 2.1 1.4l1.4 3.7q1.9.6 1.9 2.8v3.5h-1v1.4q0 1.2-1.2 1.2t-1.2-1.2v-1.4H4.2v1.4q0 1.2-1.2 1.2t-1.2-1.2v-1.4H.8V8.4q0-2.2 1.9-2.8zM5 5.4h9l-1-2.6q-.2-.5-.7-.5H6.7q-.5 0-.7.5zM3.9 7.7a1.2 1.2 0 100 2.4 1.2 1.2 0 000-2.4zm11.2 0a1.2 1.2 0 100 2.4 1.2 1.2 0 000-2.4z" />
    </svg>
  );
}

const CEMETERY =
  "440,242 500,246 540,260 592,310 596,350 585,380 545,385 540,395 518,390 530,355 470,355 455,325 435,275";

function Basemap() {
  return (
    <svg width="1454" height="598" viewBox="0 0 1454 598" fill="none" strokeLinejoin="round">
      <defs>
        <pattern id="hatch" width="6" height="6" patternUnits="userSpaceOnUse" patternTransform="rotate(45)">
          <path d="M0 0V6" stroke="#f3b9b0" strokeWidth="0.6" />
        </pattern>
        <path id="rhamna" d="M1136 201Q1190 217 1262 212" />
        <path id="prefecture" d="M146 434Q190 435 212 446T258 470" />
      </defs>
      <rect width="1454" height="598" fill="#f2efe9" />
      <path d={FARM_BLOCKS} fill="#eff1d8" />
      <path d={FARMLAND} fill="#eff1d8" />
      <path d={GROVES} fill="#c0e6b7" />
      <path d={GREEN_BLOCKS} fill="#bfe6b6" />
      <path d={WOODLAND} fill="#bddab1" />
      <path d={URBAN} fill="#dadada" />
      <path
        d={area([
          ["B", "495,505 560,515 620,520 620,540 550,535 500,525"],
          ["B", "790,250 825,245 828,300 805,400 760,395 785,340 775,310"],
        ])}
        fill="#dcdfae"
      />
      <path
        d={area([
          ["E", "510,625 560,640 630,640 658,705 590,743 560,700"],
          ["B", "830,300 872,375 895,405 820,412"],
          ["E", "760,220 780,210 785,250 765,280 750,250"],
        ])}
        fill="#d3d1c0"
      />
      <path
        d={area([
          ["E", "495,760 530,705 600,770 600,800 540,838 500,800"],
          ["E", "665,430 730,430 720,480 680,480"],
          ["E", "610,470 670,450 690,490 630,530"],
          ["E", "950,210 1010,270 1000,300 960,260"],
          ["E", "350,530 400,560 385,585 345,550"],
          ["E", "985,140 1050,130 1070,190 1030,230 1000,180"],
          ["E", "650,290 690,265 720,300 680,330"],
        ])}
        fill="#e0f5c6"
      />
      <path
        d={area([
          ["E", "800,270 860,260 872,360 815,370"],
          ["E", "790,245 840,220 855,260 800,270"],
        ])}
        fill="#ccf7d6"
      />
      <path
        d={area([
          ["E", "660,1020 675,1005 678,1035 665,1040"],
          ["E", "690,1050 715,1050 715,1085 700,1080"],
          ["D", "915,505 925,460 950,475 935,500"],
          ["B", "375,430 395,430 395,445 375,445"],
        ])}
        fill="#fbdfc4"
      />
      <path d={area([["E", "540,170 600,165 620,225 560,245 540,220"]])} fill="#ebe9e4" />
      <path d={WATER} fill="#a6d3e3" />
      <path d={area([["B", CEMETERY]])} fill="#f5e0db" stroke="#f3b9b0" strokeWidth="0.7" />
      <path d={area([["B", CEMETERY]])} fill="url(#hatch)" />
      <path
        d={layer([
          ["B", "833,268 860,290 890,286 930,310 948,328 943,360 952,400"],
          ["B", "838,290 850,330 875,362 905,375 900,400"],
        ])}
        stroke="#a5cfa1"
        strokeWidth="1.8"
      />
      <path d={STREETS} stroke="#c3c5c8" strokeWidth="0.7" />
      <path d={MINOR} stroke="#bcbcbd" strokeWidth="0.9" />
      <path
        d={layer([
          ["D", "685,70 742,98"],
          ["E", "505,242 648,242"],
          ["E", "520,255 640,265"],
          ["E", "575,238 645,262"],
          ["A", "437,900 432,925"],
        ])}
        stroke="#bdbbd4"
        strokeWidth="1.6"
      />
      <path d={WADIS} stroke="#a5d3e3" strokeWidth="1.2" strokeDasharray="6 3" />
      <path d={RIVERS} stroke="#a5d3e3" strokeWidth="1.5" />
      <path d={TENSIFT} stroke="#a9d3e5" strokeWidth="1.7" />
      <path d={TENSIFT} stroke="#958fba" strokeWidth="1.2" strokeOpacity="0.85" />
      <path d={RAIL} stroke="#7b7b7b" strokeWidth="1" />
      <path d={PRIMARY} stroke="#f6c37c" strokeWidth="1.7" />
      <path d={layer([["E", "770,200 690,350 658,415"]])} stroke="#c79a74" strokeWidth="1.4" />
      <path d={TRUNK} stroke="#f8937a" strokeWidth="1.9" />
      <path d={MOTORWAY} stroke="#e86a88" strokeWidth="2.2" />
      <path d={BORDER} stroke="#bc9dbc" strokeWidth="1.5" strokeDasharray="8 1.5 3 1.5" strokeOpacity="0.9" />
      <path d={BORDER_FINE} stroke="#bc9dbc" strokeWidth="1.1" strokeDasharray="6 2 1.5 2 1.5 2" strokeOpacity="0.9" />
      <path d="M1343 390.500l3.500-6.500 3.500 6.500z" fill="#d08f55" />

      {SHIELDS.map(([k, cx, cy, w, h, lines], i) => (
        <g key={i}>
          <rect x={cx - w / 2} y={cy - h / 2} width={w} height={h} rx="1.5" fill={SHIELD[k][0]} stroke={SHIELD[k][1]} />
          {lines.map((t, j) => (
            <MapText
              key={t}
              $plain
              $size={9.6}
              $fill={SHIELD[k][2]}
              x={cx}
              y={cy + 3.6 + (j - (lines.length - 1) / 2) * 12}
            >
              {t}
            </MapText>
          ))}
        </g>
      ))}
      {PLACES.map(([x, y, s, t]) => (
        <MapText key={t} $size={s} x={x} y={y}>
          {t}
        </MapText>
      ))}
      {DISTRICTS.map(([x, y, t]) => (
        <MapText key={t + x} $size={10.1} $italic $fill="#9a6f9c" x={x} y={y}>
          {t}
        </MapText>
      ))}
      <path
        d="M686 307.5c.7 0 1 .9 1 1.9v2.6l5 3.3v1.4l-5-1.6v2.5l1.5 1.2v.9l-2.5-.7-2.5.7v-.9l1.5-1.2v-2.5l-5 1.6v-1.4l5-3.3v-2.6c0-1 .3-1.9 1-1.9z"
        fill="#8461c4"
      />
      {AIRPORT.map((t, i) => (
        <MapText key={t} $size={i < 3 ? 10.2 : 9.2} $italic={i < 3} $fill="#7655b5" x={686} y={331 + i * 12}>
          {t}
        </MapText>
      ))}
      {EXITS.map(([x, y, t]) => (
        <MapText key={t} $size={9.8} $italic $fill="#a6202c" x={x} y={y}>
          {t}
        </MapText>
      ))}
      <MapText $size={10.3} $fill="#8d6490" $anchor="start">
        <textPath href="#rhamna">Province de Rhamna</textPath>
      </MapText>
      <MapText $size={8.4} $fill="#8d6490" x="1250" y="214" transform="rotate(-2 1250 214)">
        الرحامنة
      </MapText>
      <MapText $size={8.6} $fill="#8d6490" x="1272" y="223" transform="rotate(48 1272 220)">
        إقليم
      </MapText>
      <MapText $size={10.3} $fill="#8d6490" $anchor="start">
        <textPath href="#prefecture">Préfecture de Marrakech</textPath>
      </MapText>
      <MapText $size={9} $fill="#8d6490" x="275" y="486" transform="rotate(40 275 484)">
        عمالة مراكش
      </MapText>
      <MapText $size={7.4} $fill="#8d6490" x="727" y="12" transform="rotate(-90 727 10)">
        إقليم
      </MapText>
    </svg>
  );
}

function FleetMap() {
  return (
    <MapView>
      <Basemap />
      {VEHICLES.map(([x, y, c]) => (
        <Pin key={x + "-" + y} $x={x} $y={y} $c={c}>
          <CarGlyph />
        </Pin>
      ))}
      <ZoomControl>
        <ZoomButton $first>+</ZoomButton>
        <ZoomButton>−</ZoomButton>
      </ZoomControl>
      <Attribution>
        <svg width="12" height="8" viewBox="0 0 12 8">
          <path fill="#4C7BE1" d="M0 0h12v4H0z" />
          <path fill="#FFD500" d="M0 4h12v3H0z" />
          <path fill="#E0BC00" d="M0 7h12v1H0z" />
        </svg>
        <span>
          <MapLink>Leaflet</MapLink> | © <MapLink>OpenStreetMap</MapLink> contributors
        </span>
      </Attribution>
    </MapView>
  );
}

function NavEntry({ icon: Icon, label, tint, nested, group, link }) {
  return (
    <NavItem $nested={nested} $group={group} $icon={tint}>
      <Icon size={24} />
      <NavLabel $link={link}>{label}</NavLabel>
      {group && (
        <Chevron>
          <MdExpandLess size={24} />
        </Chevron>
      )}
    </NavItem>
  );
}

export default function App() {
  return (
    <Frame>
      <GlobalStyle />
      <Page>
        <Header>
          <Brand>
            <MdDirectionsCar size={28} />
            AI-Drive
          </Brand>
          <BellButton>
            <MdNotifications size={24} />
            <Badge>3</Badge>
          </BellButton>
          <Avatar $size={32}>A</Avatar>
        </Header>
        <Body>
          <Sidebar>
            <TopStrip />
            <UserBlock>
              <Avatar $size={40}>A</Avatar>
              <div>
                <UserName>Utilisateur</UserName>
                <UserRole>Administrateur</UserRole>
              </div>
            </UserBlock>
            <Nav>
              <NavEntry icon={MdSpeed} label="Capteurs" group />
              <NavEntry icon={MdLocationOn} label="GPS" tint="#1976d2" nested link />
              <NavEntry icon={MdDirectionsCar} label="Gestion" group />
              <NavEntry icon={MdDirectionsCar} label="Véhicules" tint="#0000ee" nested link />
              <NavEntry icon={MdNotifications} label="Alertes" tint="#0000ee" nested link />
              <Rule $m="12px 0 7px" />
              <Overline>Administration</Overline>
              <NavEntry icon={MdPeople} label="Utilisateurs" tint="#0000ee" link />
            </Nav>
            <SideFooter>
              <Rule $m="0 0 8px" />
              <NavEntry icon={MdExitToApp} label="Déconnexion" />
              <LegalBlock>
                <Legal>© 2025 AI-Drive</Legal>
                <Legal>Tous droits réservés</Legal>
              </LegalBlock>
            </SideFooter>
          </Sidebar>
          <Content>
            <TitleRow>
              <PageTitle>
                <MdLocationOn size={24} />
                Localisation des Véhicules
              </PageTitle>
              <RefreshButton>
                <MdRefresh size={20} />
                Actualiser
              </RefreshButton>
            </TitleRow>
            <CardRow>
              <Card $w={217}>
                <CardTitle>Total des véhicules</CardTitle>
                <Metric $tint="#1976d2">
                  <MdDirectionsCar size={35} />
                  <MetricValue>7</MetricValue>
                </Metric>
                <Rule />
                <ChipRow>
                  <Chip $bg="#4caf50">5 actifs</Chip>
                  <Chip $bg="#ebebeb">2 inactifs</Chip>
                </ChipRow>
              </Card>
              <Card $w={301}>
                <CardTitle>Vitesse moyenne</CardTitle>
                <Metric $tint="#ff9800">
                  <MdSpeed size={35} />
                  <MetricValue>39.6 km/h</MetricValue>
                </Metric>
                <Rule />
                <Caption $m="8px 0 0">Calculée sur les véhicules actifs et inactifs</Caption>
              </Card>
              <Card $w={210}>
                <CardTitle>Filtrer par statut</CardTitle>
                <SelectBox>
                  <SelectLabel>Statut</SelectLabel>
                  <SelectValue>Tous les véhicules</SelectValue>
                  <MdArrowDropDown size={24} />
                </SelectBox>
              </Card>
            </CardRow>
            <MapCard>
              <MapTitle>Carte des véhicules</MapTitle>
              <Caption $m="0 0 16px">
                Affichage de 7 véhicules sur la carte. Cliquez sur un marqueur pour voir les détails.
              </Caption>
              <FleetMap />
            </MapCard>
          </Content>
        </Body>
      </Page>
      <ScrollTrack>
        <svg width="15" height="11" viewBox="0 0 15 11">
          <path d="M7.5 1.5L13 9.5H2z" fill="#9f9f9f" stroke="#9f9f9f" strokeWidth="2" strokeLinejoin="round" />
        </svg>
        <ScrollThumb />
        <svg width="15" height="11" viewBox="0 0 15 11">
          <path d="M7.5 9.5L13 1.5H2z" fill="#9f9f9f" stroke="#9f9f9f" strokeWidth="2" strokeLinejoin="round" />
        </svg>
      </ScrollTrack>
    </Frame>
  );
}
